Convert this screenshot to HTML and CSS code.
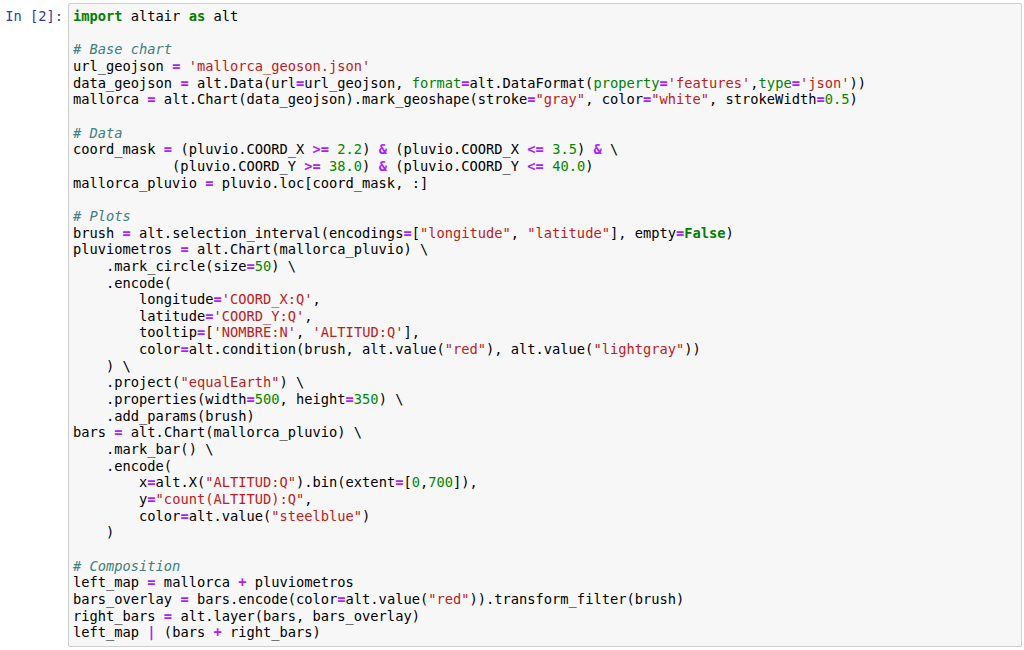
FILE: index.html
```html
<!DOCTYPE html>
<html>
<head>
<meta charset="utf-8">
<link rel="stylesheet" href="styles.css">
</head>
<body>
<div class="cell">
<div class="prompt">In&nbsp;[2]:</div>
<div class="input"><pre class="code"><span class="k">import</span> altair <span class="k">as</span> alt

<span class="c"># Base chart</span>
url_geojson <span class="o">=</span> <span class="s">'mallorca_geoson.json'</span>
data_geojson <span class="o">=</span> alt.Data(url<span class="o">=</span>url_geojson, <span class="b">format</span><span class="o">=</span>alt.DataFormat(<span class="b">property</span><span class="o">=</span><span class="s">'features'</span>,<span class="b">type</span><span class="o">=</span><span class="s">'json'</span>))
mallorca <span class="o">=</span> alt.Chart(data_geojson).mark_geoshape(stroke<span class="o">=</span><span class="s">"gray"</span>, color<span class="o">=</span><span class="s">"white"</span>, strokeWidth<span class="o">=</span><span class="n">0.5</span>)

<span class="c"># Data</span>
coord_mask <span class="o">=</span> (pluvio.COORD_X <span class="o">&gt;=</span> <span class="n">2.2</span>) <span class="o">&amp;</span> (pluvio.COORD_X <span class="o">&lt;=</span> <span class="n">3.5</span>) <span class="o">&amp;</span> \
            (pluvio.COORD_Y <span class="o">&gt;=</span> <span class="n">38.0</span>) <span class="o">&amp;</span> (pluvio.COORD_Y <span class="o">&lt;=</span> <span class="n">40.0</span>)
mallorca_pluvio <span class="o">=</span> pluvio.loc[coord_mask, :]

<span class="c"># Plots</span>
brush <span class="o">=</span> alt.selection_interval(encodings<span class="o">=</span>[<span class="s">"longitude"</span>, <span class="s">"latitude"</span>], empty<span class="o">=</span><span class="k">False</span>)
pluviometros <span class="o">=</span> alt.Chart(mallorca_pluvio) \
    .mark_circle(size<span class="o">=</span><span class="n">50</span>) \
    .encode(
        longitude<span class="o">=</span><span class="s">'COORD_X:Q'</span>,
        latitude<span class="o">=</span><span class="s">'COORD_Y:Q'</span>,
        tooltip<span class="o">=</span>[<span class="s">'NOMBRE:N'</span>, <span class="s">'ALTITUD:Q'</span>],
        color<span class="o">=</span>alt.condition(brush, alt.value(<span class="s">"red"</span>), alt.value(<span class="s">"lightgray"</span>))
    ) \
    .project(<span class="s">"equalEarth"</span>) \
    .properties(width<span class="o">=</span><span class="n">500</span>, height<span class="o">=</span><span class="n">350</span>) \
    .add_params(brush)
bars <span class="o">=</span> alt.Chart(mallorca_pluvio) \
    .mark_bar() \
    .encode(
        x<span class="o">=</span>alt.X(<span class="s">"ALTITUD:Q"</span>).bin(extent<span class="o">=</span>[<span class="n">0</span>,<span class="n">700</span>]),
        y<span class="o">=</span><span class="s">"count(ALTITUD):Q"</span>,
        color<span class="o">=</span>alt.value(<span class="s">"steelblue"</span>)
    )

<span class="c"># Composition</span>
left_map <span class="o">=</span> mallorca <span class="o">+</span> pluviometros
bars_overlay <span class="o">=</span> bars.encode(color<span class="o">=</span>alt.value(<span class="s">"red"</span>)).transform_filter(brush)
right_bars <span class="o">=</span> alt.layer(bars, bars_overlay)
left_map <span class="o">|</span> (bars <span class="o">+</span> right_bars)</pre></div>
</div>
</body>
</html>
```

FILE: styles.css
```css
html, body {
  margin: 0;
  padding: 0;
  background: #ffffff;
}

.cell {
  display: flex;
  align-items: flex-start;
  padding: 3px 2px 0 0;
  font-family: "DejaVu Sans Mono", monospace;
  font-size: 13.72px;
  line-height: 16.65px;
}

.prompt {
  width: 63px;
  flex: none;
  text-align: right;
  color: #303F9F;
  padding-top: 5px;
  margin-right: 5px;
  white-space: nowrap;
}

.input {
  flex: 1;
  background: #f7f7f7;
  border: 1px solid #cfcfcf;
  border-radius: 2px;
  padding: 4px 4px 5px 4px;
}

.code {
  margin: 0;
  font: inherit;
  color: #000000;
  white-space: pre;
}

.k { color: #008000; font-weight: bold; }
.c { color: #408080; font-style: italic; }
.s { color: #BA2121; }
.o { color: #AA22FF; font-weight: bold; }
.n { color: #008800; }
.b { color: #008000; }
```
